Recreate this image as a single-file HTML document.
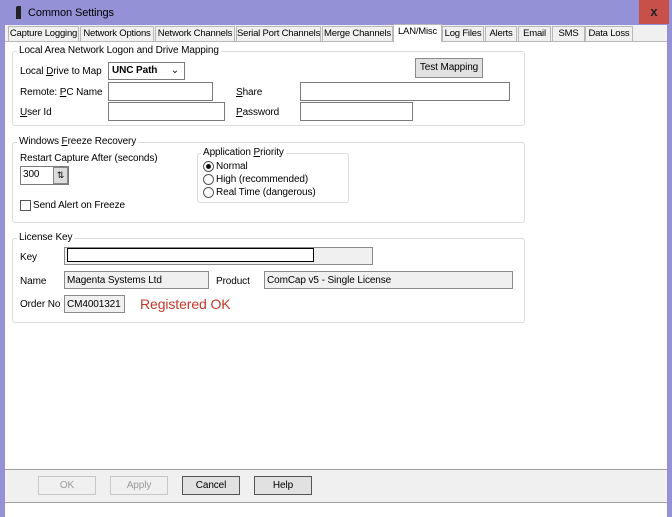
<!DOCTYPE html>
<html><head><style>
*{box-sizing:border-box;margin:0;padding:0;white-space:nowrap}
body{width:672px;height:517px;background:#9591d6;font-family:"Liberation Sans",sans-serif;font-size:10px;letter-spacing:-0.1px;color:#000;position:relative;overflow:hidden}
.a{position:absolute}
.tab{position:absolute;top:26px;height:16px;border:1px solid #b8b8b8;border-bottom:none;background:#f0f0f0;text-align:center;line-height:14px;font-size:9.5px;letter-spacing:-0.2px;overflow:hidden}
.grp{position:absolute;border:1px solid #dcdcdc;border-radius:3px}
.gt{position:absolute;top:-7px;left:4px;background:#fff;padding:0 2px;font-size:10px}
.in{position:absolute;border:1px solid #7a7a7a;background:#fff;height:19px}
.ro{position:absolute;border:1px solid #8a8a8a;background:#f0f0f0;height:18px;line-height:17px;padding-left:2px;font-size:10px}
.lb{position:absolute;font-size:10px}
.btn{position:absolute;height:19px;border:1px solid #8a8a8a;background:#e1e1e1;text-align:center;line-height:18px;font-size:10px}
.rad{position:absolute;width:11px;height:11px;border:1px solid #555;border-radius:50%;background:#fff}
</style></head><body>
<div class="a" style="left:0;top:0;width:672px;height:25px;background:#9591d6"></div>
<div class="a" style="left:16px;top:6px;width:5px;height:13px;background:#222;border-radius:2px 0 0 0"></div>
<div class="a" style="left:28px;top:7px;font-size:11px">Common Settings</div>
<div class="a" style="left:639px;top:0;width:30px;height:24px;background:#c8504a;color:#222;text-align:center;line-height:24px;font-weight:bold;font-size:13px">x</div>
<div class="a" style="left:5px;top:25px;width:662px;height:17px;background:#f0f0f0"></div>
<div class="tab" style="left:8px;width:71px">Capture Logging</div>
<div class="tab" style="left:80px;width:74px">Network Options</div>
<div class="tab" style="left:155px;width:80px">Network Channels</div>
<div class="tab" style="left:236px;width:85px">Serial Port Channels</div>
<div class="tab" style="left:322px;width:71px">Merge Channels</div>
<div class="tab" style="left:393px;top:24px;height:18px;width:49px;background:#fff;z-index:2">LAN/Misc</div>
<div class="tab" style="left:442px;width:42px">Log Files</div>
<div class="tab" style="left:485px;width:32px">Alerts</div>
<div class="tab" style="left:518px;width:33px">Email</div>
<div class="tab" style="left:552px;width:33px">SMS</div>
<div class="tab" style="left:585px;width:48px">Data Loss</div>
<div class="a" style="left:5px;top:41px;width:662px;height:428px;background:#fff;border-top:1px solid #b8b8b8"></div>

<div class="grp" style="left:12px;top:51px;width:513px;height:75px"><div class="gt">Local Area Network Logon and Drive Mapping</div></div>
<div class="lb" style="left:20px;top:66px">Local <u>D</u>rive to Map</div>
<div class="in" style="left:108px;top:62px;width:77px;height:18px;line-height:15px;padding-left:3px;font-weight:bold;font-size:10px">UNC Path<span style="position:absolute;right:5px;font-weight:normal">&#8964;</span></div>
<div class="btn" style="left:415px;top:58px;width:68px;height:20px">Test Mapping</div>
<div class="lb" style="left:20px;top:87px">Remote: <u>P</u>C Name</div>
<div class="in" style="left:108px;top:82px;width:105px"></div>
<div class="lb" style="left:236px;top:87px"><u>S</u>hare</div>
<div class="in" style="left:300px;top:82px;width:210px"></div>
<div class="lb" style="left:20px;top:107px"><u>U</u>ser Id</div>
<div class="in" style="left:108px;top:102px;width:117px"></div>
<div class="lb" style="left:236px;top:107px"><u>P</u>assword</div>
<div class="in" style="left:300px;top:102px;width:113px"></div>

<div class="grp" style="left:12px;top:142px;width:513px;height:81px"><div class="gt">Windows <u>F</u>reeze Recovery</div></div>
<div class="lb" style="left:20px;top:153px">Restart Capture After (seconds)</div>
<div class="in" style="left:20px;top:166px;width:49px;height:19px;line-height:16px;padding-left:2px;font-size:10px">300</div>
<div class="a" style="left:53px;top:167px;width:15px;height:17px;background:#ddd;border:1px solid #888;font-size:9px;text-align:center;line-height:15px">&#8645;</div>
<div class="a" style="left:20px;top:200px;width:11px;height:11px;border:1px solid #555;background:#fff"></div>
<div class="lb" style="left:33px;top:200px">Send Alert on Freeze</div>
<div class="grp" style="left:197px;top:153px;width:152px;height:50px"><div class="gt" style="top:-7px;left:3px">Application <u>P</u>riority</div></div>
<div class="rad" style="left:203px;top:161px"><div style="position:absolute;left:2px;top:2px;width:5px;height:5px;border-radius:50%;background:#111"></div></div>
<div class="lb" style="left:216px;top:161px">Normal</div>
<div class="rad" style="left:203px;top:174px"></div>
<div class="lb" style="left:216px;top:174px">High (recommended)</div>
<div class="rad" style="left:203px;top:187px"></div>
<div class="lb" style="left:216px;top:187px">Real Time (dangerous)</div>

<div class="grp" style="left:12px;top:238px;width:513px;height:85px"><div class="gt">License Key</div></div>
<div class="lb" style="left:20px;top:252px">Key</div>
<div class="ro" style="left:64px;top:247px;width:309px;height:18px"></div>
<div class="a" style="left:67px;top:248px;width:247px;height:14px;border:1px solid #000;background:#fff"></div>
<div class="lb" style="left:20px;top:276px">Name</div>
<div class="ro" style="left:64px;top:271px;width:145px">Magenta Systems Ltd</div>
<div class="lb" style="left:216px;top:276px">Product</div>
<div class="ro" style="left:264px;top:271px;width:249px">ComCap v5 - Single License</div>
<div class="lb" style="left:20px;top:299px">Order No</div>
<div class="ro" style="left:64px;top:295px;width:61px">CM4001321</div>
<div class="a" style="left:140px;top:296px;font-size:14px;color:#c0392b">Registered OK</div>

<div class="a" style="left:5px;top:469px;width:662px;height:34px;background:#f0f0f0;border-top:1px solid #a0a0a0;border-bottom:1px solid #a0a0a0"></div>
<div class="btn" style="left:38px;top:476px;width:58px;color:#999;border-color:#c8c8c8;background:#f0f0f0">OK</div>
<div class="btn" style="left:110px;top:476px;width:58px;color:#999;border-color:#c8c8c8;background:#f0f0f0">Apply</div>
<div class="btn" style="left:182px;top:476px;width:58px;border-color:#555">Cancel</div>
<div class="btn" style="left:254px;top:476px;width:58px;border-color:#555">Help</div>
<div class="a" style="left:5px;top:503px;width:662px;height:14px;background:#fff"></div>
</body></html>
